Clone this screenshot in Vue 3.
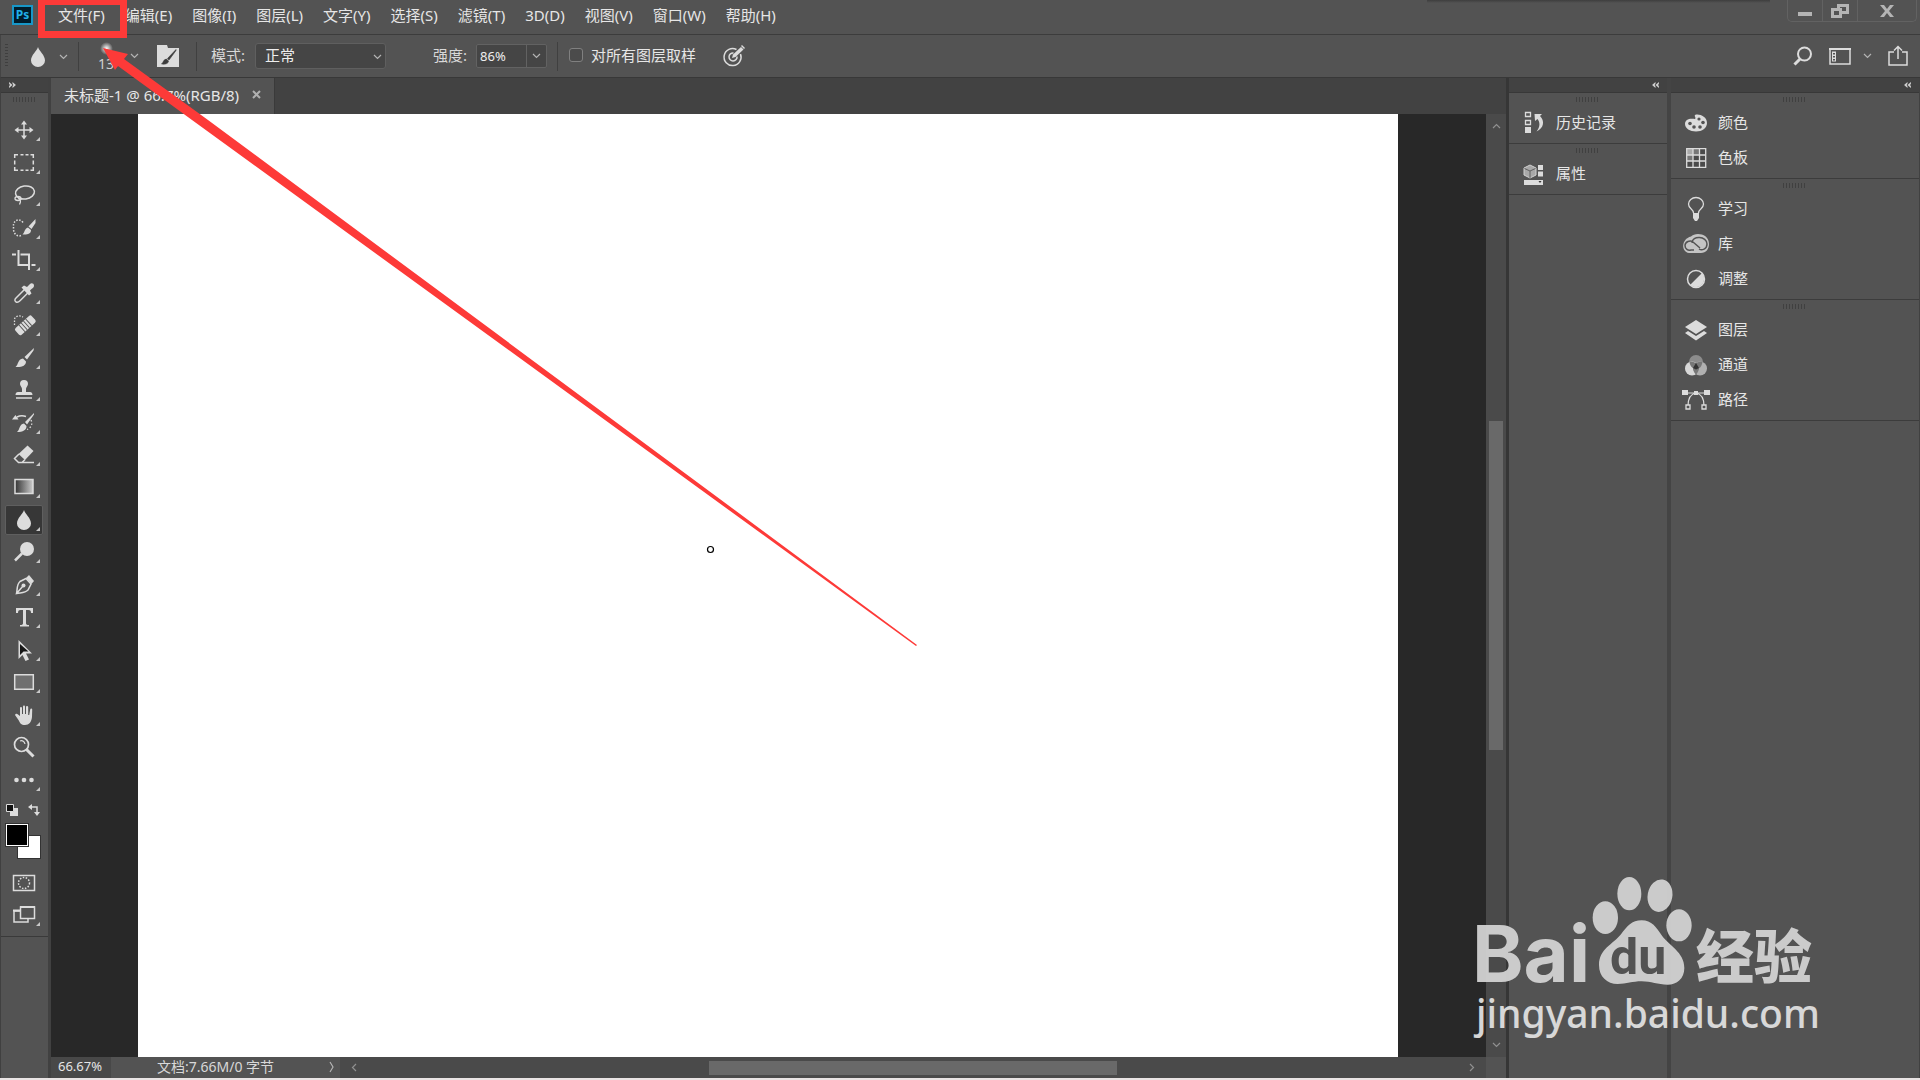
<template>
  <div class="app">
    <header class="menubar">
      <span class="logo">Ps</span>
      <nav class="menus">
        <button v-for="m in menus" :key="m" class="menu">{{ m }}</button>
      </nav>
      <div class="window-controls">
        <button class="win" aria-label="最小化">
          <svg width="14" height="16" viewBox="0 0 14 16"><path d="M0 9h14v4H0z" /></svg>
        </button>
        <button class="win" aria-label="还原">
          <svg width="18" height="16" viewBox="0 0 18 16">
            <path d="M6 1h12v10h-7V8h4V4H9v3H6z" />
            <path d="M0 5h11v10H0zM3 8v4h5V8z" fill-rule="evenodd" />
          </svg>
        </button>
        <button class="win close" aria-label="关闭">
          <svg width="14" height="12" viewBox="0 0 14 12"><path d="M0 0h4l3 4 3-4h4L9 6l5 6h-4L7 8l-3 4H0l5-6z" /></svg>
        </button>
      </div>
      <div class="top-shadow"></div>
    </header>

    <section class="options">
      <span class="grip-v"></span>
      <button class="tool-preset" aria-label="模糊工具">
        <svg width="14" height="20" viewBox="0 0 14 20"><path :d="dropPath" fill="#dcdcdc" /></svg>
        <svg class="chev" width="9" height="6" viewBox="0 0 9 6"><path d="M1 1l3.500 3.500L8 1" /></svg>
      </button>
      <span class="sep"></span>
      <button class="brush-preset" aria-label="画笔预设">
        <span class="brush"><i class="soft"></i><span>13</span></span>
        <svg class="chev" width="9" height="6" viewBox="0 0 9 6"><path d="M1 1l3.500 3.500L8 1" /></svg>
      </button>
      <button class="brush-panel" aria-label="画笔设置">
        <svg width="22" height="22" viewBox="0 0 22 22">
          <path d="M0 0h10l1 3h11v19H0z" fill="#dcdcdc" />
          <path d="M19 4.500l-8.500 9 1.500 1.500L19 5.500zM9.500 14l2 2c0 2.500-3 3.500-7 3 2-1 1.500-4.500 5-5z" fill="#3c3c3c" stroke="#3c3c3c" stroke-width=".6" />
        </svg>
      </button>
      <span class="sep"></span>
      <label class="opt-label" for="mode">模式:</label>
      <span class="select-box">
        <select id="mode" v-model="mode"><option>正常</option></select>
        <svg class="chev" width="9" height="6" viewBox="0 0 9 6"><path d="M1 1l3.500 3.500L8 1" /></svg>
      </span>
      <label class="opt-label strength" for="strength">强度:</label>
      <span class="num-box">
        <input id="strength" v-model="strength" type="text" />
        <button aria-label="展开强度">
          <svg class="chev" width="9" height="6" viewBox="0 0 9 6"><path d="M1 1l3.500 3.500L8 1" /></svg>
        </button>
      </span>
      <span class="sep"></span>
      <label class="sample"><input v-model="sampleAll" type="checkbox" />对所有图层取样</label>
      <button class="pressure" aria-label="压力控制大小">
        <svg width="22" height="22" viewBox="0 0 22 22" fill="none" stroke="#dcdcdc">
          <path d="M13.500 4.500A8.500 8.500 0 1 0 17.500 9" stroke-width="1.500" />
          <path d="M10.500 8a4 4 0 1 0 3.500 3.500" stroke-width="1.500" />
          <path d="M9 13l1-3.500L18 2l2.500 2.500L12.500 12z" fill="#dcdcdc" stroke="none" />
          <path d="M19 0l3 3-1 1-3-3z" fill="#dcdcdc" stroke="none" />
        </svg>
      </button>
      <div class="options-right">
        <button aria-label="搜索">
          <svg width="20" height="20" viewBox="0 0 20 20" fill="none" stroke="#dcdcdc" stroke-width="2">
            <circle cx="11.500" cy="8" r="6.500" /><path d="M7 13l-5.500 5.500" stroke-width="3" />
          </svg>
        </button>
        <button class="workspace" aria-label="工作区">
          <svg width="22" height="18" viewBox="0 0 22 18">
            <path d="M1 2h20v15H1z" fill="none" stroke="#dcdcdc" stroke-width="1.500" />
            <path d="M0 1h22v2H0zM3 4.500h4v10H3z" fill="#dcdcdc" />
            <path d="M4 6h2v1.500H4zM4 9h2v1.500H4zM4 12h2v1.500H4z" fill="#535353" />
          </svg>
          <svg class="chev" width="9" height="6" viewBox="0 0 9 6"><path d="M1 1l3.500 3.500L8 1" /></svg>
        </button>
        <button aria-label="共享">
          <svg width="20" height="22" viewBox="0 0 20 22" fill="none" stroke="#dcdcdc" stroke-width="1.500">
            <path d="M6 7H1v13h18V7h-5M10 14V2M6 5.500l4-4 4 4" />
          </svg>
        </button>
      </div>
    </section>

    <main class="body">
      <aside class="toolbar">
        <div class="strip"><svg width="7" height="6" viewBox="0 0 8 7"><path d="M0 0l4 3.500L0 7V5l1-1.500L0 2zM4 0l4 3.500L4 7V5l1-1.500L4 2z" /></svg></div>
        <div class="tool-panel">
          <span class="grip"></span>
          <div class="tools">
            <button
              v-for="t in tools"
              :key="t.name"
              class="tool"
              :class="{ active: t.name === current }"
              :aria-label="t.name"
              @click="current = t.name"
            >
              <svg width="24" height="24" viewBox="0 0 24 24">
                <g v-html="t.icon"></g>
                <path v-if="!t.single" d="M28 19v4h-4z" fill="#c8c8c8" />
              </svg>
            </button>
          </div>
          <div class="mini">
            <button aria-label="默认颜色">
              <svg width="12" height="12" viewBox="0 0 12 12">
                <path d="M4 4h8v8H4z" fill="#dcdcdc" />
                <path d="M.5.5h7v7h-7z" fill="#111" stroke="#dcdcdc" />
              </svg>
            </button>
            <button aria-label="切换颜色">
              <svg width="12" height="12" viewBox="0 0 12 12">
                <path d="M3 3h6v6" fill="none" stroke="#dcdcdc" stroke-width="1.500" />
                <path d="M0 3l4-3v6zM9 12L6 8h6z" fill="#dcdcdc" />
              </svg>
            </button>
          </div>
          <div class="swatches"><i class="bg"></i><i class="fg"></i></div>
          <button class="mode-btn" aria-label="快速蒙版">
            <svg width="24" height="24" viewBox="0 0 24 24" fill="none" stroke="#dcdcdc">
              <path d="M1.500 4.500h21v15h-21z" stroke-width="1.500" />
              <circle cx="12" cy="12" r="5.500" stroke-width="1.500" stroke-dasharray="1.500 1.500" />
            </svg>
          </button>
          <button class="mode-btn" aria-label="屏幕模式">
            <svg width="24" height="24" viewBox="0 0 24 24" fill="none" stroke="#dcdcdc" stroke-width="1.500">
              <path d="M8 8H2v11h14v-3" /><path d="M1 7.500h7M8 4h15" stroke-width="2" /><path d="M8.500 4h14v11.500h-14z" />
              <path d="M28 19v4h-4z" fill="#c8c8c8" stroke="none" />
            </svg>
          </button>
        </div>
      </aside>

      <section class="document">
        <div class="tabs">
          <div class="tab">
            <span>未标题-1 @ 66.7%(RGB/8)</span>
            <button aria-label="关闭文档"><svg width="9" height="9" viewBox="0 0 9 9"><path d="M1 1l7 7M8 1L1 8" stroke="#b0b0b0" stroke-width="2" /></svg></button>
          </div>
        </div>
        <div class="work">
          <div class="pasteboard"><div class="artboard"></div></div>
          <div class="vscroll">
            <svg class="chev dim" width="9" height="6" viewBox="0 0 9 6"><path d="M1 5l3.500-3.500L8 5" /></svg>
            <i class="vthumb"></i>
            <svg class="chev dim" width="9" height="6" viewBox="0 0 9 6"><path d="M1 1l3.500 3.500L8 1" /></svg>
          </div>
        </div>
        <footer class="status">
          <span class="zoom">66.67%</span>
          <button class="info"><span>文档:7.66M/0 字节</span>
            <svg class="chev" width="5" height="12" viewBox="0 0 5 12"><path d="M1 1l3 5-3 5" /></svg>
          </button>
          <div class="hscroll">
            <svg class="chev dim" width="6" height="9" viewBox="0 0 6 9"><path d="M5 1L1.500 4.500 5 8" /></svg>
            <i class="hthumb"></i>
            <svg class="chev dim" width="6" height="9" viewBox="0 0 6 9"><path d="M1 1l3.500 3.500L1 8" /></svg>
          </div>
          <i class="corner"></i>
        </footer>
      </section>

      <aside v-for="(dock, i) in docks" :key="i" class="dock" :class="'dock-' + i">
        <div class="strip right"><svg width="7" height="6" viewBox="0 0 8 7"><path d="M8 0L4 3.500 8 7V5L7 3.500 8 2zM4 0L0 3.500 4 7V5L3 3.500 4 2z" /></svg></div>
        <div v-for="(group, g) in dock" :key="g" class="group">
          <span class="grip"></span>
          <button v-for="p in group" :key="p.name" class="panel-btn">
            <svg width="28" height="24" viewBox="0 0 28 24" v-html="p.icon"></svg>
            <span>{{ p.name }}</span>
          </button>
        </div>
      </aside>
    </main>

    <svg class="overlay" width="1000" height="700" viewBox="0 0 1000 700">
      <rect x="41.500" y="1.500" width="82" height="33" fill="none" stroke="#fd3a38" stroke-width="7" />
      <path d="M103 48l25 6-4 5 84 61 709 525-1 1L192 120l-74-54-3 4z" fill="#fd3a38" />
      <circle cx="710.500" cy="549.500" r="3" fill="none" stroke="#000" stroke-width="1.200" />
    </svg>

    <svg class="watermark" width="360" height="180" viewBox="0 0 360 180">
      <text class="wm-bai" x="2" y="112">Bai</text>
      <svg x="120" y="5" width="105" height="112" viewBox="450 105 315 336">
        <ellipse cx="496" cy="233" rx="38" ry="49" />
        <ellipse cx="568" cy="161" rx="36" ry="50" />
        <ellipse cx="660" cy="167" rx="37" ry="49" transform="rotate(10 660 167)" />
        <ellipse cx="717" cy="256" rx="38" ry="48" />
        <path d="M605 241c30 0 45 22 60 45 22 32 68 50 68 98 0 32-22 50-50 50-30 0-50-10-78-10s-45 8-72 8c-32 0-56-22-56-57 0-48 42-62 66-92 18-24 32-42 62-42z" />
      </svg>
      <text class="wm-du" x="140" y="104">du</text>
      <text class="wm-cn" x="226" y="108">经验</text>
      <text class="wm-url" x="6" y="158">jingyan.baidu.com</text>
    </svg>
  </div>
</template>

<script setup>
import { ref } from 'vue'

const menus = ['文件(F)', '编辑(E)', '图像(I)', '图层(L)', '文字(Y)', '选择(S)', '滤镜(T)', '3D(D)', '视图(V)', '窗口(W)', '帮助(H)']

const mode = ref('正常')
const strength = ref('86%')
const sampleAll = ref(false)
const current = ref('模糊工具')

const dropPath = 'M7 0c1 4 7 8 7 13.500a7 6.500 0 0 1-14 0C0 8 6 4 7 0z'
const line = 'fill="none" stroke="#dcdcdc"'
const solid = 'fill="#dcdcdc"'

const tools = [
  { name: '移动工具', icon: `<path d="M12 4v16M4 12h16" ${line} stroke-width="1.500"/><path d="M12 2.500l3 4H9zM12 21.500l3-4H9zM2.500 12l4-3v6zM21.500 12l-4-3v6z" ${solid}/>` },
  { name: '选框工具', icon: `<path d="M2.700 7V3.700H6M8.500 3.700h3M13.500 3.700h3M18.500 3.700h2.800V7M21.300 9.500v4M21.300 16v3.300h-2.800M16.500 19.300h-3M11.500 19.300h-3M6 19.300H2.700V16M2.700 13.500v-4" ${line} stroke-width="1.500"/>` },
  { name: '套索工具', icon: `<ellipse cx="13" cy="9.500" rx="9.500" ry="6.500" transform="rotate(-8 13 9.500)" ${line} stroke-width="1.500"/><ellipse cx="6" cy="15.500" rx="3" ry="2" ${line} stroke-width="1.300"/><path d="M6 15.500c3 1 3 3 1.500 6" ${line} stroke-width="1.300"/>` },
  { name: '快速选择工具', icon: `<path d="M11 6.500C7 1.500 1.500 5 1.500 9v4c0 5 4 8 7.500 6.500" ${line} stroke-width="1.500" stroke-dasharray="1.500 1.500"/><path d="M23.500 3v4l-4 6-3-2.500zM16 11.500l3 2.500c0 4-4 5-8.500 4.500 2-1.500 2-6 5.500-7z" ${solid}/>` },
  { name: '裁剪工具', icon: `<path d="M0 6.500h4M6.500 2v15H16M8.500 6.500H17v15.500M19.500 17H23.500" ${line} stroke-width="2"/>` },
  { name: '吸管工具', icon: `<path d="M12.500 8.500L4 17c-1.500 1.500-1.500 3 .2 4 1.500.6 2.500 0 3.800-1.300l8-8" ${line} stroke-width="1.500"/><path d="M9.500 6.500L12 4.500l3 1.500 3-3c1.500-1.500 4-.5 4 1.500s-1 2-4 5l1.500 3-2.500 2z" ${solid}/>` },
  { name: '污点修复画笔工具', icon: `<g transform="rotate(-42 13 12)"><rect x="2" y="8" width="22" height="9" rx="2" ${solid}/><path d="M8.500 8v9M11.500 8v9M14.500 8v9M17.500 8v9" stroke="#535353" stroke-width="1"/></g><path d="M2.500 12V6c1-3 5-4 8.500-2" ${line} stroke-width="1.300" stroke-dasharray="1.500 1.500"/>` },
  { name: '画笔工具', icon: `<path d="M22 2L12.500 11l2.500 2.500 6.500-9zM11 12.500l3 3c0 4-4 6-10.500 5.500C6.500 19 5.500 13 11 12.500z" ${solid}/>` },
  { name: '仿制图章工具', icon: `<path d="M12 2a4 4 0 0 1 4 4c0 2-2 3-2 5v3h4c1.500 0 2.500 1 2.500 3h-17c0-2 1-3 2.500-3h4v-3c0-2-2-3-2-5a4 4 0 0 1 4-4z" ${solid}/><path d="M4 20h16" ${line} stroke-width="1.500"/>` },
  { name: '历史记录画笔工具', icon: `<path d="M22 2L13 11l2 2.500 7-10zM12 12.500l2.500 2.500c0 4-3.500 6-9.500 6 3-2 2-8 7-8.500zM0 8.500L3.500 4l3 4.500z" ${solid}/><path d="M5 6c3-1.500 6-1.500 9-.5" ${line} stroke-width="1.500"/><path d="M19 9c2 4 0 8-4 9.500" ${line} stroke-width="1.300" stroke-dasharray="1.500 2"/>` },
  { name: '橡皮擦工具', icon: `<path d="M15.500 2.500l6 5.500-8.500 9-6.500-6z" ${solid}/><path d="M7 11l-4.500 4.500 4 4h3.500l3-3M6.500 19.500H22" ${line} stroke-width="1.500"/>` },
  { name: '渐变工具', icon: `<defs><linearGradient id="gr"><stop offset="0" stop-color="#333"/><stop offset="1" stop-color="#ccc"/></linearGradient></defs><path d="M3 4.500h18v14H3z" fill="url(#gr)" stroke="#dcdcdc" stroke-width="1.500"/>` },
  { name: '模糊工具', icon: `<path transform="translate(5 2)" d="${dropPath}" ${solid}/>` },
  { name: '减淡工具', icon: `<circle cx="15" cy="9" r="7" ${solid}/><path d="M10 13.500L3 20.500" ${line} stroke-width="2.500"/>` },
  { name: '钢笔工具', icon: `<path d="M4.500 20.500c1-4 0-9 3.500-12l6-3 5 5.500-3 6c-3 3-7 2.500-11.500 3.500zM5 20l6-7" ${line} stroke-width="1.500"/><circle cx="11.500" cy="12.500" r="2" ${solid}/><path d="M14 5l3-3 5 6-2.500 3z" ${solid}/>` },
  { name: '文字工具', icon: `<path d="M4 3h17v5h-2c0-2-.5-3-2.500-3H14v13c0 1.500.5 2 3 2v1.500H8V20c2.500 0 3-.5 3-2V5H8.500C6.500 5 6 6 6 8H4z" ${solid}/>` },
  { name: '路径选择工具', icon: `<path d="M6.500 2v19l4-4 3 6 3.500-1.500-3-6H20z" fill="#dcdcdc"/><path d="M8 6v11l3.500-3.500h5z" fill="#161616"/>` },
  { name: '矩形工具', icon: `<path d="M2.700 4.700h18.600v14.600H2.700z" fill="#707070" stroke="#dcdcdc" stroke-width="1.500"/>` },
  { name: '抓手工具', icon: `<path d="M8 13V5c0-1.500 2-1.500 2 0v6h1V3.500c0-1.500 2-1.500 2 0V11h1V4c0-1.500 2-1.500 2.200 0V12h1l1-5.500c.3-1.500 2.300-1 2 .5L20 14c-.5 5-3 8-7 8-4 0-5-2-6.500-5L3 12c.5-1.500 2-1.500 3-.5z" ${solid}/>` },
  { name: '缩放工具', single: true, icon: `<circle cx="9.500" cy="9.500" r="7" ${line} stroke-width="1.700"/><path d="M8 6c2.500-1 4.500.5 5 3" ${line} stroke-width="1.200"/><path d="M14.500 14.500l7 7" ${line} stroke-width="3"/>` },
  { name: '编辑工具栏', icon: `<circle cx="4.500" cy="12" r="2.300" ${solid}/><circle cx="12" cy="12" r="2.300" ${solid}/><circle cx="19.500" cy="12" r="2.300" ${solid}/>` },
]

const docks = [
  [
    [{ name: '历史记录', icon: `<path d="M5.500 1.500h5v4h-5zM5.500 9.500h5v4h-5z" ${line} stroke-width="1.300"/><path d="M5 16h6v6H5zM14.500 3H22l-2 2c5 5 4 12-3.500 15.500C20.500 16 20 11 17.500 8L15 10z" ${solid}/>` }],
    [{ name: '属性', icon: `<path d="M10 3l6 3v7l-6 3-6-3V6z" fill="#a8a8a8" stroke="#d0d0d0"/><path d="M4.500 6.500L10 9l5.500-2.500M10 9v7" stroke="#606060" fill="none"/><path d="M18 3h5v5h-5zM18 9.500h5v5h-5zM4 18h19v5H4z" ${solid}/><path d="M18.500 19h3L20 21z" fill="#333"/>` }],
  ],
  [
    [
      { name: '颜色', icon: `<path d="M3 13c0-5 5-6 10-5 1.500-1.500-1-2.500 0-4 4-1.500 12 1.500 12 8 0 5-5 8.500-11 8.500S3 17.500 3 13z" ${solid}/><g fill="#535353"><circle cx="8" cy="12.500" r="1.800"/><circle cx="12" cy="16" r="1.800"/><circle cx="18" cy="16" r="1.800"/><circle cx="21" cy="11.500" r="1.800"/><circle cx="17" cy="8" r="1.600"/></g>` },
      { name: '色板', icon: `<path d="M5 3h19v18H5z" fill="#4a4a4a"/><path d="M5 3h6v6H5z" fill="#aaa"/><path d="M11 3h6v6h-6zM5 9h6v6H5z" fill="#777"/><path d="M4.700 2.700h19v18.600h-19zM11 3v18M17.500 3v18M5 9h18M5 15h18" ${line} stroke-width="1.300"/>` },
    ],
    [
      { name: '学习', icon: `<path d="M11.500 16c0-4-5-4-5-9a7.500 6.500 0 0 1 15 0c0 5-5 5-5 9" ${line} stroke-width="1.300"/><path d="M11 16h6v5l-2 3h-2l-2-3z" ${solid}/>` },
      { name: '库', icon: `<path d="M9 4.500C13 0 27 1 27 12c0 5-3 9-8 9H7C-1 20-1 7 9 4.500z" fill="#c4c4c4"/><path d="M18 16l-7-6c-3-2.500-8 0-8 3.500S6 19 9 18h3M10 11c0-8 15-7 15 1 0 5-5 7-8 5" fill="none" stroke="#535353" stroke-width="1.500"/>` },
      { name: '调整', icon: `<circle cx="14" cy="12" r="8.500" ${line} stroke-width="1.500"/><path d="M20 6a8.500 8.500 0 0 1-12 12z" ${solid}/>` },
    ],
    [
      { name: '图层', icon: `<path d="M14 2l11 7-11 7L3 9z" ${solid}/><path d="M6 13l8 5 8-5 3 2-11 7.500L3 15z" ${solid}/>` },
      { name: '通道', icon: `<circle cx="14" cy="9" r="7" fill="#8c8c8c"/><circle cx="10" cy="15.500" r="7" fill="#d8d8d8"/><circle cx="18" cy="15.500" r="7" fill="#b0b0b0"/><path d="M14 10c2 2 3.500 3 3 6-1 3-1.500 4-3 5.500-1.500-1.500-2-2.500-3-5.500-.5-3 1-4 3-6z" fill="#777"/><path d="M7.500 9c4-1 6 1 6.500 1 .5 0 3-2 6.500-1-1 5-3 7-6.500 7s-6-3-6.500-7z" fill="#777"/><path d="M14 10l3 5-3 1.500-3-1.500z" fill="#333"/>` },
      { name: '路径', icon: `<path d="M3 5h22M6 18c0-7 2-12 8-13 6 1 8 6 8 13" ${line} stroke-width="1.200"/><path d="M0 2h6v5H0zM22 2h6v5h-6zM12 3h4v4h-4z" ${solid}/><path d="M4 17h4v4H4zM20 17h4v4h-4z" fill="#535353" stroke="#dcdcdc" stroke-width="1.300"/>` },
    ],
  ],
]
</script>

<style>
body { margin: 0; background: #e9e4e4; }
</style>

<style scoped>
.app {
  position: relative;
  height: 100vh;
  padding-bottom: 2px;
  box-sizing: border-box;
  display: flex;
  flex-direction: column;
  overflow: hidden;
  color: #e6e6e6;
  font-family: "Noto Sans", "Noto Sans CJK SC", sans-serif;
  font-size: 15px;
}
button {
  background: none; border: none; padding: 0; margin: 0;
  color: inherit; font: inherit; display: flex; align-items: center;
}
svg { display: block; overflow: visible; flex: none; }
.chev path { fill: none; stroke: #b4b4b4; stroke-width: 1.2; }
.chev.dim path { stroke: #909090; }

.menubar {
  position: relative; height: 34px; flex: none; background: #535353;
  border-bottom: 1px solid #3c3c3c; display: flex; align-items: flex-start;
}
.logo {
  margin: 5px 0 0 12px; width: 17px; height: 16px; border: 2px solid #1897c8;
  background: #001c2b; color: #21b0ea; font-size: 12px; font-weight: 700;
  line-height: 16px; text-align: center;
}
.menus { display: flex; gap: 20px; margin-left: 25px; height: 30px; }
.menu { line-height: 30px; white-space: nowrap; }
.window-controls {
  margin: 0 3px 0 auto; height: 22px; display: flex; border: 1px solid #626262;
  border-top: none; border-radius: 0 0 5px 5px; box-sizing: border-box;
}
.win { width: 35px; justify-content: center; fill: #b4b4b4; border-right: 1px solid #626262; }
.win.close { width: 58px; border-right: none; }
.top-shadow {
  position: absolute; top: 0; right: 150px; width: 343px; height: 3px;
  background: linear-gradient(#3e3e3e, #535353);
}

.options {
  height: 42px; flex: none; background: #535353; border-bottom: 1px solid #383838;
  border-left: 1px solid #444; display: flex; align-items: center;
}
.grip-v {
  width: 3px; height: 24px; margin-left: 4px;
  background: repeating-linear-gradient(#3f3f3f 0 1px, transparent 1px 3px);
}
.tool-preset { margin: 2px 10px 0 23px; gap: 14px; }
.sep { width: 1px; height: 29px; background: #404040; }
.brush-preset { margin: 0 18px 0 20px; gap: 17px; }
.brush { display: flex; flex-direction: column; align-items: center; width: 14px; line-height: 18px; font-size: 14px; color: #d0d0d0; }
.soft { width: 13px; height: 13px; margin-top: 3px; border-radius: 50%; background: radial-gradient(#fff, transparent 70%); }
.brush-panel { margin-right: 17px; }
.opt-label { margin-left: 14px; margin-right: 10px; padding-bottom: 3px; white-space: nowrap; color: #d8d8d8; line-height: 20px; }
.opt-label.strength { margin-left: 47px; margin-right: 9px; }
.select-box { position: relative; }
.select-box select {
  appearance: none; display: block; width: 131px; height: 26px; padding: 0 9px 2px; color: #eee;
  background: #454545; border: 1px solid #5f5f5f; border-radius: 3px; font: inherit;
}
.select-box .chev { position: absolute; right: 4px; top: 11px; }
.num-box { display: flex; height: 24px; box-sizing: border-box; border: 1px solid #626262; border-radius: 2px; background: #454545; margin-right: 10px; }
.num-box input { width: 49px; padding: 0 3px 1px; box-sizing: border-box; border: none; background: none; color: #eee; font-family: "Noto Sans", sans-serif; font-size: 13px; }
.num-box button { width: 20px; justify-content: center; border-left: 1px solid #626262; }
.sample { display: flex; align-items: center; gap: 8px; margin-left: 11px; padding-bottom: 3px; line-height: 20px; white-space: nowrap; }
.sample input { appearance: none; width: 14px; height: 14px; margin: 0; border: 1px solid #808080; border-radius: 3px; background: #4b4b4b; }
.pressure { margin-left: 27px; }
.options-right { margin-left: auto; margin-right: 12px; display: flex; align-items: center; gap: 16px; }
.workspace { gap: 12px; }

.body { flex: 1; min-height: 0; display: flex; background: #535353; }
.strip {
  height: 14px; flex: none; background: #424242; border-bottom: 1px solid #383838;
  display: flex; align-items: center; padding: 0 8px; fill: #d0d0d0;
}
.strip.right { justify-content: flex-end; }
.grip {
  display: block; width: 24px; height: 5px; margin: 0 auto;
  background: repeating-linear-gradient(90deg, #404040 0 1px, transparent 1px 3px);
}

.toolbar { width: 47px; flex: none; border-left: 1px solid #404040; border-right: 3px solid #414141; }
.tool-panel { padding-top: 4px; padding-bottom: 1px; border-bottom: 1px solid #3a3a3a; }
.tools { margin-top: 12px; height: 682px; display: grid; grid-auto-rows: 1fr; justify-content: start; padding-left: 4px; }
.tool { width: 38px; height: 30px; align-self: center; box-sizing: border-box; justify-content: center; border: 1px solid transparent; border-radius: 2px; }
.tool.active { background: #373737; border-color: #5f5f5f; }
.mini { display: flex; gap: 10px; padding: 8px 0 7px 5px; }
.swatches { display: grid; width: 36px; height: 36px; margin: 0 0 12px 4px; }
.swatches i { grid-area: 1 / 1; width: 24px; height: 24px; box-sizing: border-box; border: 1px solid #333; }
.swatches .bg { background: #fff; place-self: end; }
.swatches .fg { background: #000; box-shadow: inset 0 0 0 1px #fff; place-self: start; }
.mode-btn { margin: 0 0 8px 11px; }

.document { flex: 1; min-width: 0; display: flex; flex-direction: column; border-right: 3px solid #363636; }
.tabs { height: 36px; flex: none; background: #424242; display: flex; }
.tab { display: flex; align-items: center; gap: 13px; padding: 0 13px 3px; background: #535353; border-right: 1px solid #3a3a3a; white-space: nowrap; }
.work { flex: 1; min-height: 0; display: flex; }
.pasteboard { flex: 1; background: #282828; padding: 0 88px 0 87px; display: flex; }
.artboard { flex: 1; background: #fff; }
.vscroll { width: 20px; background: #4a4a4a; display: grid; grid-template-rows: 24px 1fr 24px; justify-items: center; align-items: center; }
.vthumb { width: 14px; height: 36.700%; background: #696969; }
.status { height: 21px; flex: none; display: flex; background: #4a4a4a; }
.zoom { width: 60px; padding-left: 7px; box-sizing: border-box; background: #484848; font-size: 13px; line-height: 19px; }
.info { width: 229px; box-sizing: border-box; padding: 0 6px 2px 46px; justify-content: space-between; background: #535353; font-size: 14px; line-height: 19px; white-space: nowrap; color: #d8d8d8; }
.hscroll { flex: 1; display: grid; grid-template-columns: 28px 1fr 28px; align-items: center; justify-items: center; }
.hthumb { width: 37.400%; height: 14px; background: #696969; }
.corner { width: 20px; background: #535353; }

.dock { border-right: 1px solid #414141; background: #535353; }
.dock-0 { width: 158px; border-right: 4px solid #444; }
.dock-1 { width: 248px; }
.group { padding: 4px 0 3px; border-bottom: 1px solid #3c3c3c; }
.group .grip { margin-bottom: 3px; }
.panel-btn { height: 35px; gap: 8px; padding-left: 11px; width: 100%; }
.panel-btn span { padding-bottom: 2px; }

.overlay { position: absolute; left: 0; top: 0; pointer-events: none; }
.watermark { position: absolute; right: 90px; bottom: 30px; fill: #d2d2d2; opacity: .95; pointer-events: none; }
.wm-bai { font-family: Inter, sans-serif; font-weight: 700; font-size: 78px; }
.wm-du { font-family: Roboto, sans-serif; font-weight: 700; font-size: 50px; fill: #535353; }
.wm-cn { font-family: "Noto Sans CJK SC", sans-serif; font-weight: 900; font-size: 58px; }
.wm-url { font-family: "Noto Sans", sans-serif; font-weight: 500; font-size: 39px; fill: #e0e0e0; }
</style>
